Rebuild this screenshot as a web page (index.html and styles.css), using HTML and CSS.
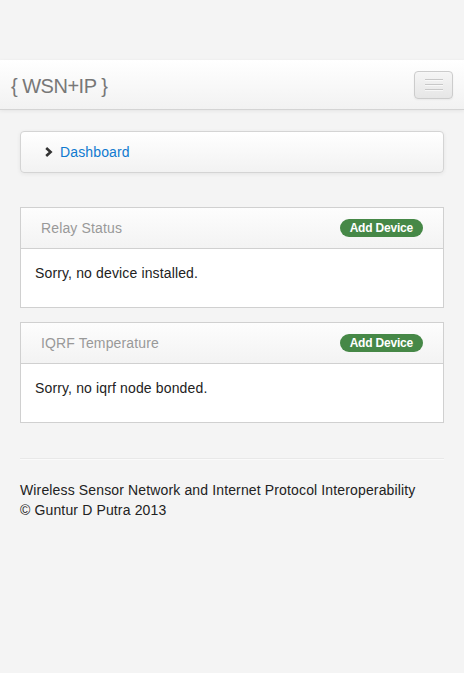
FILE: index.html
```html
<!DOCTYPE html>
<html>
<head>
<meta charset="utf-8">
<link rel="stylesheet" href="styles.css">
</head>
<body>
<div class="navbar">
  <a class="brand">{ WSN+IP }</a>
  <button class="toggle"><span class="bar"></span><span class="bar"></span><span class="bar"></span></button>
</div>
<div class="container">
  <div class="crumb">
    <svg class="chev" width="8" height="10" viewBox="0 0 8 10"><path d="M1.2 1 L5.6 5 L1.2 9" fill="none" stroke="#333" stroke-width="2.6" stroke-linejoin="miter"/></svg>
    <a class="crumb-link">Dashboard</a>
  </div>
  <div class="panel">
    <div class="panel-head"><span class="title">Relay Status</span><span class="badge">Add Device</span></div>
    <div class="panel-body">Sorry, no device installed.</div>
  </div>
  <div class="panel">
    <div class="panel-head"><span class="title">IQRF Temperature</span><span class="badge">Add Device</span></div>
    <div class="panel-body">Sorry, no iqrf node bonded.</div>
  </div>
  <hr class="rule">
  <footer class="footer">
    <p>Wireless Sensor Network and Internet Protocol Interoperability<br>© Guntur D Putra 2013</p>
  </footer>
</div>
</body>
</html>
```
FILE: styles.css
```css
html, body {
  margin: 0;
  padding: 0;
}
body {
  background: #f4f4f4;
  font-family: "Liberation Sans", Arial, sans-serif;
  font-size: 14px;
  line-height: 20px;
  color: #333;
  padding-top: 60px;
  letter-spacing: 0.14px;
}
.navbar {
  height: 49px;
  display: flex;
  align-items: center;
  justify-content: space-between;
  padding: 0 11px 0 11px;
  background: linear-gradient(#ffffff, #f2f2f2);
  border-bottom: 1px solid #d4d4d4;
  box-shadow: 0 1px 4px rgba(0,0,0,0.065);
}
.brand {
  font-size: 20px;
  color: #777;
  line-height: 24px;
  padding-top: 2px;
  letter-spacing: -0.5px;
}
.toggle {
  width: 39px;
  height: 28px;
  margin-top: 0;
  border: 1px solid #cccccc;
  border-radius: 4px;
  background: linear-gradient(#f5f5f5, #e6e6e6);
  box-shadow: inset 0 1px 0 rgba(255,255,255,0.2), 0 1px 2px rgba(0,0,0,0.05);
  display: flex;
  flex-direction: column;
  align-items: center;
  justify-content: center;
  gap: 4px;
  padding: 0;
}
.bar {
  display: block;
  width: 18px;
  height: 1px;
  background: #c8c8c8;
  box-shadow: 0 1px 0 rgba(255,255,255,0.6);
}
.container {
  padding: 21px 20px 0 20px;
}
.crumb {
  height: 40px;
  border: 1px solid #d4d4d4;
  border-radius: 4px;
  background: linear-gradient(#ffffff, #f2f2f2);
  box-shadow: 0 1px 4px rgba(0,0,0,0.065);
  display: flex;
  align-items: center;
  padding-left: 24px;
  margin-bottom: 34px;
}
.chev {
  margin-right: 7px;
  margin-top: 0;
}
.crumb-link {
  color: #0f7ad0;
  font-size: 14px;
}
.panel {
  border: 1px solid #d0d0d0;
  background: #fff;
  margin-bottom: 14px;
}
.panel-head {
  height: 40px;
  border-bottom: 1px solid #d0d0d0;
  background: linear-gradient(#fdfdfd, #f3f3f3);
  display: flex;
  align-items: center;
  justify-content: space-between;
  padding: 0 20px 0 20px;
}
.title {
  color: #999;
  font-size: 14px;
}
.badge {
  background: #468847;
  color: #fff;
  font-weight: bold;
  font-size: 12px;
  line-height: 14px;
  padding: 2px 10px 2px 10px;
  border-radius: 9px;
  letter-spacing: -0.2px;
}
.panel-body {
  height: 58px;
  padding: 14px 14px 0 14px;
  box-sizing: border-box;
  color: #222;
}
.rule {
  border: 0;
  border-top: 1px solid #e8e8e8;
  border-bottom: 1px solid #fafafa;
  margin: 35px 0 20px 0;
}
.footer p {
  margin: 0;
  color: #222;
}
```
